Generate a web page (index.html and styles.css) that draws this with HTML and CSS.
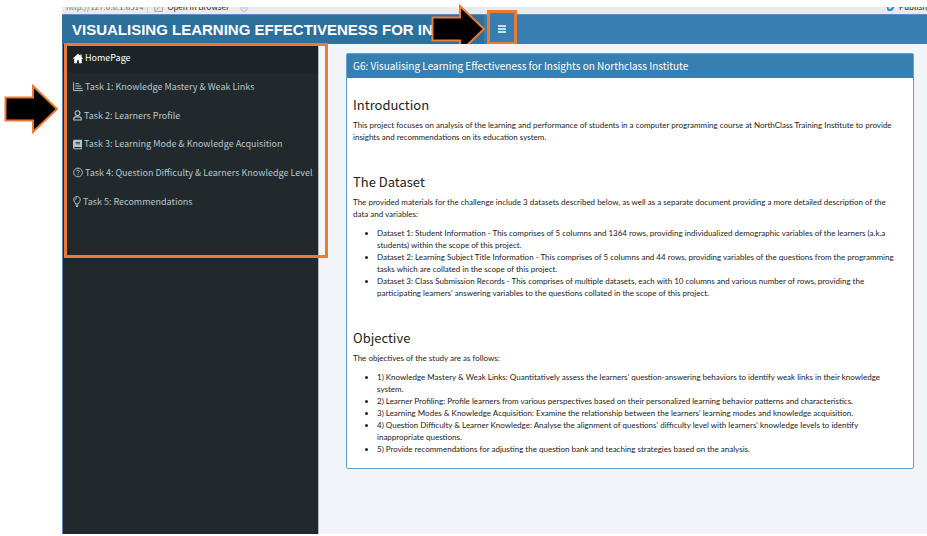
FILE: index.html
```html
<!DOCTYPE html>
<html lang="en">
<head>
<meta charset="utf-8">
<title>Visualising Learning Effectiveness</title>
<link rel="stylesheet" href="styles.css">
</head>
<body>
<div class="window">
  <div class="toolbar">
    <span class="address">http://127.0.0.1:6514</span>
    <span class="divider"></span>
    <svg class="tool-icon" viewBox="0 0 12 12" fill="none" stroke="#8d9299"><rect x="1" y="2" width="9" height="8"/><path d="M3 8l4-4" stroke="#3f8fc9"/></svg>
    <a class="open" href="#">Open in Browser</a>
    <svg class="tool-icon refresh" viewBox="0 0 12 12" fill="none" stroke="#a9bdd0"><circle cx="6" cy="6" r="4"/><path d="M4 6h4"/></svg>
    <a class="publish" href="#"><svg class="tool-icon" viewBox="0 0 12 12" fill="none" stroke="#2b8fd6" stroke-width="2"><circle cx="5" cy="7" r="3"/><path d="M2 6c3-5 8-3 7 0s-4 3-7 4"/></svg>Publish</a>
  </div>
  <header class="header">
    <div class="brand">VISUALISING LEARNING EFFECTIVENESS FOR INS</div>
    <div class="navbar">
      <button class="toggle" type="button" aria-label="Toggle navigation">
        <svg viewBox="0 0 8 8" stroke="#fff" stroke-width="1.3"><path d="M0 1h8M0 4h8M0 7h8"/></svg>
      </button>
    </div>
    <svg class="arrow arrow-toggle" viewBox="0 0 54 50"><path d="M1.500 13.500H29V2L53 25 29 48V36.500H1.500z"/></svg>
  </header>
  <div class="main">
    <aside class="sidebar">
      <nav class="menu">
        <a class="item active" href="#"><svg class="icon" viewBox="0 0 16 16"><path d="M8 .3 0 7.500l1 1.400 1-.8V15.500h4.500v-4.800h3v4.800H14V8.100l1 .8 1-1.400-2.300-2.100V1.500h-2v2.100z"/></svg>HomePage</a>
        <a class="item" href="#"><svg class="icon" viewBox="0 0 16 16" fill="none" stroke="currentColor" stroke-width="1.500"><path d="M1 1v13.500h15M4 3.500h6M4 7.200h9M4 11h11"/></svg>Task 1: Knowledge Mastery &amp; Weak Links</a>
        <a class="item" href="#"><svg class="icon narrow" viewBox="0 0 13 16" fill="none" stroke="currentColor" stroke-width="1.600"><circle cx="6.500" cy="4.500" r="3.500"/><path d="M1 14.500v-1.500c0-2 1.500-3 3-3h5c1.500 0 3 1 3 3v1.500z"/></svg>Task 2: Learners Profile</a>
        <a class="item" href="#"><svg class="icon narrow" viewBox="0 0 14 16"><path fill-rule="evenodd" d="M3 .5h11v11.200h-.8v2.300h.8v1.500H3c-1.700 0-3-1-3-2.800V3.300C0 1.500 1.300.5 3 .5zM4 4v1.200h7V4zm0 2.500v1.200h7V6.500zM3 11.700c-1.600 0-1.600 2.300 0 2.300h9v-2.300z"/></svg>Task 3: Learning Mode &amp; Knowledge Acquisition</a>
        <a class="item" href="#"><svg class="icon" viewBox="0 0 16 16" fill="none" stroke="currentColor" stroke-width="1.500"><circle cx="8" cy="8" r="7"/><path d="M5.700 6.300c0-3 4.800-2.700 4.600-.1C10.200 7.700 8 7.700 8 9.500M8 10.800v1.500"/></svg>Task 4: Question Difficulty &amp; Learners Knowledge Level</a>
        <a class="item" href="#"><svg class="icon thin" viewBox="0 0 11 16" fill="none" stroke="currentColor" stroke-width="1.400"><path d="M3.500 11.500C3.500 9.500.8 8.500.8 5.400.8-.6 10.200-.6 10.200 5.400c0 3.100-2.700 4.100-2.700 6.100zM3.500 13.500h4M4 15.300h3M3 5.500c0-1.600 1-2.300 2.300-2.400"/></svg>Task 5: Recommendations</a>
      </nav>
    </aside>
    <main class="content">
      <section class="card">
        <h1 class="card-title">G6: Visualising Learning Effectiveness for Insights on Northclass Institute</h1>
        <div class="card-body">
          <h2>Introduction</h2>
          <p>This project focuses on analysis of the learning and performance of students in a computer programming course at NorthClass Training Institute to provide insights and recommendations on its education system.</p>
          <h2>The Dataset</h2>
          <p>The provided materials for the challenge include 3 datasets described below, as well as a separate document providing a more detailed description of the data and variables:</p>
          <ul>
            <li>Dataset 1: Student Information - This comprises of 5 columns and 1364 rows, providing individualized demographic variables of the learners (a.k.a students) within the scope of this project.</li>
            <li>Dataset 2: Learning Subject Title Information - This comprises of 5 columns and 44 rows, providing variables of the questions from the programming tasks which are collated in the scope of this project.</li>
            <li>Dataset 3: Class Submission Records - This comprises of multiple datasets, each with 10 columns and various number of rows, providing the participating learners' answering variables to the questions collated in the scope of this project.</li>
          </ul>
          <h2>Objective</h2>
          <p>The objectives of the study are as follows:</p>
          <ul>
            <li>1) Knowledge Mastery &amp; Weak Links: Quantitatively assess the learners' question-answering behaviors to identify weak links in their knowledge system.</li>
            <li>2) Learner Profiling: Profile learners from various perspectives based on their personalized learning behavior patterns and characteristics.</li>
            <li>3) Learning Modes &amp; Knowledge Acquisition: Examine the relationship between the learners' learning modes and knowledge acquisition.</li>
            <li>4) Question Difficulty &amp; Learner Knowledge: Analyse the alignment of questions' difficulty level with learners' knowledge levels to identify inappropriate questions.</li>
            <li>5) Provide recommendations for adjusting the question bank and teaching strategies based on the analysis.</li>
          </ul>
        </div>
      </section>
    </main>
    <div class="callout"></div>
    <svg class="arrow arrow-menu" viewBox="0 0 54 50"><path d="M1.500 13.500H29V2L53 25 29 48V36.500H1.500z"/></svg>
  </div>
</div>
</body>
</html>
```
FILE: styles.css
```css
* { box-sizing: border-box; }
body {
  margin: 0;
  background: #fff;
  color: #222;
  font-family: "Noto Sans CJK SC", "Noto Sans", sans-serif;
  font-size: 8px;
  line-height: 12px;
}
a { color: inherit; text-decoration: none; }
.window {
  display: flex;
  flex-direction: column;
  min-height: 100vh;
  padding: 7px 0 2px 62px;
}
.toolbar {
  display: flex;
  align-items: flex-end;
  height: 7px;
  overflow: hidden;
  padding: 0 0 1px 4px;
  background: #e8eaed;
  color: #777;
  font-size: 8px;
  line-height: 12px;
}
.divider { width: 1px; height: 6px; margin: 0 6px 0 4px; background: #ccc; }
.tool-icon { width: 10px; height: 10px; margin-right: 3px; }
.refresh { margin-left: 10px; }
.open { color: #222; }
.publish {
  display: flex;
  align-items: center;
  margin-left: auto;
  color: #222;
}
.header {
  position: relative;
  display: flex;
  height: 30px;
  border-top: 1px solid #5a8fc8;
  background: #377fb0;
}
.brand {
  width: 422px;
  padding-left: 10px;
  overflow: hidden;
  white-space: nowrap;
  background: #2e709c;
  color: #fff;
  font: bold 15px/29px "Liberation Sans", Arial, sans-serif;
}
.navbar { flex: 1; }
.toggle {
  position: relative;
  display: flex;
  align-items: center;
  justify-content: center;
  width: 30px;
  height: 35px;
  margin: -5px 0 0 3px;
  padding: 2px 0 0;
  border: 3px solid #ed7a32;
  background: #377fb0;
}
.toggle svg { width: 8px; height: 8px; }
.main { position: relative; display: flex; flex: 1; }
.sidebar {
  width: 257px;
  border-left: 1px solid #5b82b8;
  border-right: 1px solid #b8bcc0;
  background: #21292c;
}
.menu {
  display: grid;
  grid-auto-rows: 1fr;
  min-height: 172px;
}
.item {
  display: flex;
  align-items: center;
  gap: 2px;
  padding-left: 10px;
  color: #b7c6cd;
  font-size: 9px;
  white-space: nowrap;
}
.active { background: #1d2326; color: #fff; }
.icon { width: 10px; height: 11px; fill: currentColor; }
.icon[fill="none"] { fill: none; }
.narrow { width: 9px; }
.thin { width: 8px; }
.content {
  flex: 1;
  padding: 9px 13px 0 27px;
  background: #f1f5f9;
}
.card {
  border: 1px solid #5fa0c8;
  border-radius: 2px;
  background: #fff;
}
.card-title {
  margin: 0;
  padding: 0 6px;
  background: #377fb0;
  color: #fff;
  font-size: 10px;
  font-weight: 400;
  line-height: 24px;
}
.card-body { padding: 18px 12px 13px 6px; }
h2 {
  margin: 0 0 5px;
  font-size: 13px;
  font-weight: 400;
  line-height: 18px;
}
p, ul { font-family: Lato, "Noto Sans", sans-serif; }
p { margin: 0 0 7px; }
ul { margin: 0; padding-left: 24px; }
p + h2, ul + h2 { margin-top: 30px; }
.callout {
  position: absolute;
  top: -1px;
  left: 2px;
  width: 264px;
  height: 215px;
  border: 3px solid #ed7a32;
  pointer-events: none;
}
.arrow {
  position: absolute;
  width: 54px;
  height: 50px;
  fill: #000;
  stroke: #ed7a32;
  stroke-width: 2px;
}
.arrow-toggle { top: -11px; left: 369px; }
.arrow-menu { top: 40px; left: -58px; }
```
